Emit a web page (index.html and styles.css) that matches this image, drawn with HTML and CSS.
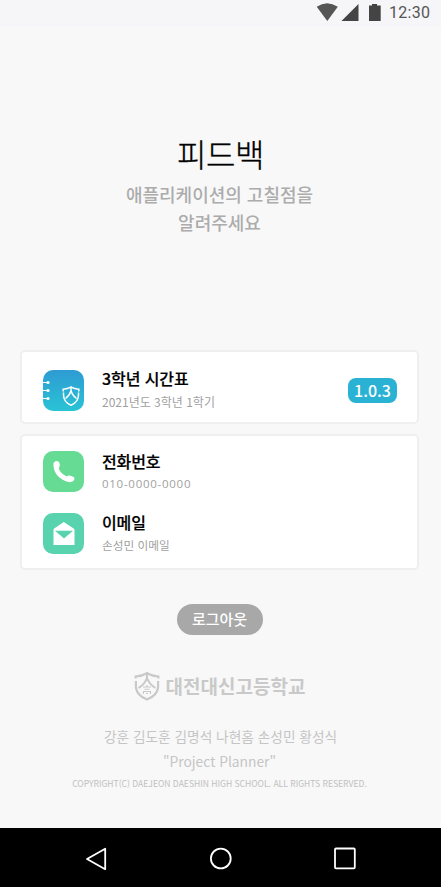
FILE: index.html
```html
<!DOCTYPE html>
<html lang="ko">
<head>
<meta charset="utf-8">
<title>피드백</title>
<link rel="stylesheet" href="styles.css">
</head>
<body>
<div class="screen">
  <header class="status">
    <svg class="status-icons" width="66" height="20" viewBox="0 0 66 20">
      <path d="M0.7 6.8Q11 -0.5 21.8 6.8L11.3 21Z" fill="#555"/>
      <path d="M42.5 4V21H25.5Z" fill="#444"/>
      <path d="M53 5.5h3V4h5v1.5h3.7V21H53Z" fill="#444"/>
    </svg>
    <span class="clock">12:30</span>
  </header>
  <main class="content">
    <h1 class="title">피드백</h1>
    <p class="subtitle">애플리케이션의 고칠점을<br>알려주세요</p>

    <section class="card card-app">
      <div class="item">
        <svg class="icon" width="41" height="41" viewBox="0 0 41 41">
          <defs><linearGradient id="sky" x1="0" y1="0" x2="0" y2="1"><stop offset="0" stop-color="#2e9bd3"/><stop offset="1" stop-color="#29c3d5"/></linearGradient></defs>
          <rect width="41" height="41" rx="10" fill="url(#sky)"/>
          <g fill="#fff"><path d="M0 12h5v1H0zM0 20h5v1H0zM0 28h5v1H0z"/><circle cx="5" cy="12.500" r="1.600"/><circle cx="5" cy="20.500" r="1.600"/><circle cx="5" cy="28.500" r="1.600"/></g>
          <g fill="none" stroke="#fff" stroke-width="1.500"><path d="M20.200 21.500V19.200Q24.500 19 28 17.200Q31.500 19 35.800 19.200V21.500M20.500 22.500V25Q20.500 32 28 35.200Q35.500 32 35.500 25V22.500"/><path d="M28 16.500V20.500Q27 25 22.500 28.500M28 20.500Q29 25 33.500 28.500"/></g>
        </svg>
        <div class="labels"><h2 class="name">3학년 시간표</h2><p class="detail term">2021년도 3학년 1학기</p></div>
        <span class="version">1.0.3</span>
      </div>
    </section>

    <section class="card card-contact">
      <div class="item">
        <svg class="icon" width="41" height="41" viewBox="0 0 41 41">
          <rect width="41" height="41" rx="10" fill="#65db93"/>
          <path d="M10.500 12.200Q12.500 8.500 15.800 10.700Q17.900 14.300 15.700 17.200Q17.300 22.300 23.700 25.500Q26.200 23.300 31.300 26.500V28.800Q29.800 31.700 25.500 31.100Q11.500 26.800 10.500 15Z" fill="#fff"/>
        </svg>
        <div class="labels"><h2 class="name">전화번호</h2><p class="detail phone">010-0000-0000</p></div>
      </div>
      <div class="item">
        <svg class="icon" width="41" height="41" viewBox="0 0 41 41">
          <rect width="41" height="41" rx="10" fill="#59d3ae"/>
          <path d="M10.500 17Q10.500 16 11.500 15.300L20.800 9L30.300 15.300Q31.500 16 31.500 17V32H10.500Z" fill="#fff"/>
          <path d="M12 17.800H30L21 25.500Z" fill="#59d3ae"/>
        </svg>
        <div class="labels mail-labels"><h2 class="name">이메일</h2><p class="detail mail">손성민 이메일</p></div>
      </div>
    </section>

    <button class="logout" type="button">로그아웃</button>

    <div class="school">
      <svg width="26" height="30" viewBox="0 0 26 30" fill="none" stroke="#c9c9c9" stroke-width="2.200">
        <path d="M1.600 7.500V5.500Q8 5 13 2.200Q18 5 24.400 5.500V7.500M1.900 10V16.500Q3 24.500 13 28.600Q23 24.500 24.100 16.500V10"/>
        <path d="M13 1V7Q11 13 4.500 17M13 7Q15 13 21.500 17" stroke-width="2"/>
        <path d="M9 16H17M13 14V16M10.500 18.300H15.500M9.500 23V20.500H16.500V23M12 22.500H14" stroke-width="1.100"/>
      </svg>
      <span class="school-name">대전대신고등학교</span>
    </div>
    <p class="credits">강훈 김도훈 김명석 나현홈 손성민 황성식</p>
    <p class="team">"Project Planner"</p>
    <p class="copyright">COPYRIGHT(C) DAEJEON DAESHIN HIGH SCHOOL. ALL RIGHTS RESERVED.</p>
  </main>
  <nav class="navbar">
    <svg width="24" height="26" viewBox="0 0 24 26"><path d="M21.200 2.800V23.200L3 13Z"/></svg>
    <svg width="24" height="26" viewBox="0 0 24 26"><circle cx="11.800" cy="12.500" r="9.900"/></svg>
    <svg width="24" height="26" viewBox="0 0 24 26"><rect x="2" y="2.500" width="19.800" height="19.800" rx="1"/></svg>
  </nav>
</div>
</body>
</html>
```
FILE: styles.css
```css
* { box-sizing: border-box; margin: 0; padding: 0; }
body { background: #f8f8f8; font-family: "Noto Sans CJK KR", sans-serif; }
h1, h2 { font-weight: inherit; }
.screen { width: 441px; height: 887px; display: flex; flex-direction: column; overflow: hidden; }
.status { height: 27px; flex: none; background: #f6f6f8; display: flex; align-items: flex-start; justify-content: flex-end; padding-right: 11px; }
.status-icons { margin-right: 7px; overflow: visible; }
.clock { font: 16px/25px Roboto, sans-serif; letter-spacing: 0.3px; color: #555; width: 41px; white-space: nowrap; }
.content { flex: 1; display: flex; flex-direction: column; align-items: center; white-space: nowrap; padding-right: 2px; }
.title { margin-top: 106px; padding-left: 2px; font-size: 32px; line-height: 40px; font-weight: 300; color: #000; letter-spacing: -0.5px; -webkit-text-stroke: 0.3px #000; }
.subtitle { margin-top: 7px; font-size: 18px; line-height: 28px; font-weight: 500; color: #acacac; text-align: center; }
.card { width: 399px; background: #fff; border: 2px solid #efefef; border-radius: 5px; padding: 0 21px; display: flex; flex-direction: column; }
.card-app { height: 74px; margin-top: 114px; padding-top: 18px; }
.card-contact { height: 136px; margin-top: 10px; padding-top: 15px; gap: 21px; }
.item { height: 41px; display: flex; align-items: center; }
.icon { flex: none; margin-right: 18px; }
.labels { flex: 1; }
.mail-labels { padding-bottom: 2px; }
.card-app .labels { padding-bottom: 2px; }
.name { font-size: 16px; line-height: 23px; font-weight: 500; color: #000; letter-spacing: -0.1px; -webkit-text-stroke: 0.2px #000; }
.detail { font-size: 12px; line-height: 21px; color: #9f9f9f; }
.term { line-height: 23px; }
.phone { font-family: "Open Sans", sans-serif; font-size: 11.5px; letter-spacing: 0.73px; }
.mail { font-size: 11.7px; }
.version { width: 49px; height: 25px; margin-right: -1px; border-radius: 8px; background: #29b2d3; color: #fff; font-size: 16px; line-height: 25px; font-weight: 500; text-align: center; }
.logout { margin-top: 34px; width: 86px; height: 31px; border: 0; border-radius: 16px; background: #a8a8a8; color: #fff; font: 500 15px/29px "Noto Sans CJK KR", sans-serif; padding-bottom: 2px; }
.school { margin-top: 36px; height: 30px; display: flex; align-items: center; gap: 6px; }
.school-name { font-size: 19px; line-height: 30px; font-weight: 700; color: #c9c9c9; }
.credits { margin-top: 24px; padding-left: 2px; font-size: 13.7px; line-height: 22px; color: #c5c5c5; }
.team { margin-top: 2px; font-size: 13.8px; line-height: 24px; color: #c5c5c5; }
.copyright { margin-top: 2px; font-size: 8.56px; line-height: 16px; color: #c0c0c0; }
.navbar { height: 59px; flex: none; background: #000; display: flex; align-items: center; justify-content: space-between; padding: 2px 84px 0; }
.navbar svg { fill: none; stroke: #fff; stroke-width: 1.8; stroke-linejoin: round; }
```
